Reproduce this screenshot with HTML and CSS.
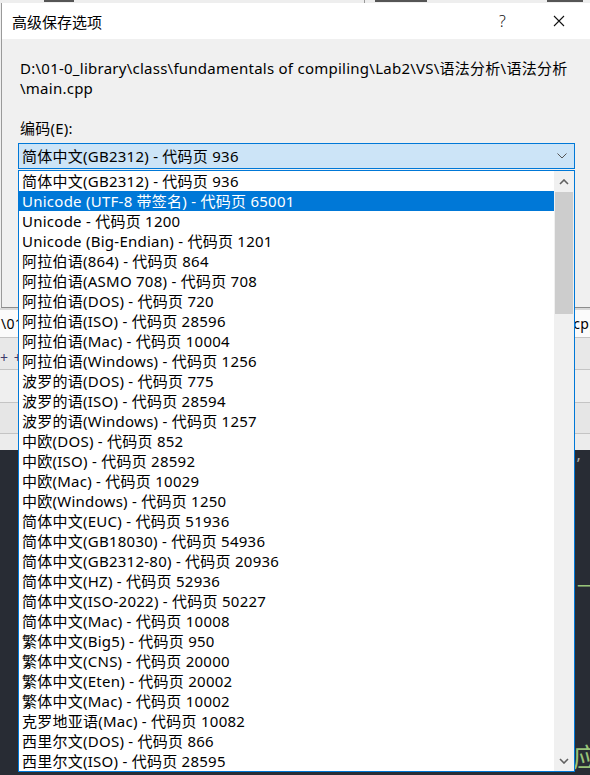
FILE: index.html
```html
<!DOCTYPE html>
<html>
<head>
<meta charset="utf-8">
<link rel="stylesheet" href="styles.css">
</head>
<body>
<div class="screen">
  <div class="topstrip"><i class="frag f1"></i><i class="frag f2"></i><i class="frag f3"></i><i class="frag f4"></i></div>
  <div class="dialog">
    <div class="titlebar">
      <span class="title">高级保存选项</span>
      <span class="help">?</span>
      <span class="close"><svg width="12" height="12" viewBox="0 0 12 12"><path d="M1 1L11 11M11 1L1 11" stroke="#111" stroke-width="1.1" fill="none"/></svg></span>
    </div>
    <div class="body">
      <div class="path">D:\01-0_library\class\fundamentals of compiling\Lab2\VS\语法分析\语法分析<br>\main.cpp</div>
      <div class="label">编码(E):</div>
      <div class="combo">
        <span class="combo-text">简体中文(GB2312) - 代码页 936</span>
        <svg class="chev" width="10" height="6" viewBox="0 0 10 6"><path d="M0.5 0.5L5 5L9.5 0.5" stroke="#555" stroke-width="1" fill="none"/></svg>
      </div>
    </div>
  </div>
  <div class="backdrop">
    <div class="brow b1"><span>\01</span><span class="right">cpp</span></div>
    <div class="brow b2"><span class="plus">+ +</span></div>
    <div class="brow b3"></div>
    <div class="brow b4"><span></span><span class="right">)</span></div>
    <div class="brow b5"></div>
    <div class="editor">
      <div class="eline e1">’</div>
      <div class="eline e2">一</div>
      <div class="eline e3">应</div>
    </div>
  </div>
  <div class="dropdown">
    <ul class="list">
      <li>简体中文(GB2312) - 代码页 936</li>
      <li class="sel">Unicode (UTF-8 带签名) - 代码页 65001</li>
      <li>Unicode - 代码页 1200</li>
      <li>Unicode (Big-Endian) - 代码页 1201</li>
      <li>阿拉伯语(864) - 代码页 864</li>
      <li>阿拉伯语(ASMO 708) - 代码页 708</li>
      <li>阿拉伯语(DOS) - 代码页 720</li>
      <li>阿拉伯语(ISO) - 代码页 28596</li>
      <li>阿拉伯语(Mac) - 代码页 10004</li>
      <li>阿拉伯语(Windows) - 代码页 1256</li>
      <li>波罗的语(DOS) - 代码页 775</li>
      <li>波罗的语(ISO) - 代码页 28594</li>
      <li>波罗的语(Windows) - 代码页 1257</li>
      <li>中欧(DOS) - 代码页 852</li>
      <li>中欧(ISO) - 代码页 28592</li>
      <li>中欧(Mac) - 代码页 10029</li>
      <li>中欧(Windows) - 代码页 1250</li>
      <li>简体中文(EUC) - 代码页 51936</li>
      <li>简体中文(GB18030) - 代码页 54936</li>
      <li>简体中文(GB2312-80) - 代码页 20936</li>
      <li>简体中文(HZ) - 代码页 52936</li>
      <li>简体中文(ISO-2022) - 代码页 50227</li>
      <li>简体中文(Mac) - 代码页 10008</li>
      <li>繁体中文(Big5) - 代码页 950</li>
      <li>繁体中文(CNS) - 代码页 20000</li>
      <li>繁体中文(Eten) - 代码页 20002</li>
      <li>繁体中文(Mac) - 代码页 10002</li>
      <li>克罗地亚语(Mac) - 代码页 10082</li>
      <li>西里尔文(DOS) - 代码页 866</li>
      <li>西里尔文(ISO) - 代码页 28595</li>
    </ul>
    <div class="scrollbar">
      <div class="arrow"><svg width="10" height="6" viewBox="0 0 10 6"><path d="M1 5L5 1L9 5" stroke="#606060" stroke-width="1.6" fill="none"/></svg></div>
      <div class="thumb"></div>
      <div class="track"></div>
      <div class="arrow"><svg width="10" height="6" viewBox="0 0 10 6"><path d="M1 1L5 5L9 1" stroke="#606060" stroke-width="1.6" fill="none"/></svg></div>
    </div>
  </div>
</div>
</body>
</html>
```

FILE: styles.css
```css
* { box-sizing: border-box; }
html, body { margin: 0; padding: 0; }
body {
  font-family: "Noto Sans", "Noto Sans CJK SC", sans-serif;
  font-size: 15px;
  letter-spacing: 0.25px;
  color: #000;
  background: #f0f0f0;
}
.screen {
  position: relative;
  width: 590px;
  height: 775px;
  overflow: hidden;
  background: #f0f0f0;
}
.topstrip {
  height: 3px;
  overflow: hidden;
  background: #eeeeee;
  display: flex;
  align-items: flex-start;
}
.frag { display: block; height: 2px; background: #555; }
.f1 { width: 30px; margin-left: 44px; }
.f2 { width: 1px; height: 3px; margin-left: 290px; background: #999; }
.f3 { width: 52px; margin-left: 10px; }
.f4 { width: 36px; margin-left: 120px; }

.dialog {
  height: 305px;
  margin-left: 1px;
  border-left: 1px solid #9a9a9a;
  border-bottom: 1px solid #8c8c8c;
  background: #f0f0f0;
  display: flex;
  flex-direction: column;
}
.titlebar {
  height: 36px;
  background: #ffffff;
  display: flex;
  align-items: center;
  padding-left: 10px;
}
.title { font-size: 15px; letter-spacing: 0; }
.help {
  margin-left: auto;
  font-size: 16px;
  font-weight: 300;
  color: #111;
  margin-right: 47px;
}
.close { width: 12px; height: 12px; display: flex; margin-right: 25px; }
.body {
  padding: 19px 0 0 18px;
}
.path {
  line-height: 20px;
  white-space: nowrap;
  color: #000;
}
.label {
  margin-top: 20px;
  line-height: 20px;
}
.combo {
  margin-top: 5px;
  height: 26px;
  width: 557px;
  margin-left: -2px;
  border: 1px solid #0078d7;
  background: #cce4f7;
  display: flex;
  align-items: center;
  padding-left: 3px;
}
.combo-text { line-height: 20px; }
.chev { margin-left: auto; margin-right: 7px; }

.backdrop { display: flex; flex-direction: column; }
.brow {
  display: flex;
  align-items: center;
  padding: 0 0 0 1px;
  font-size: 14px;
  border-bottom: 1px solid #c4c4c4;
}
.brow .right { margin-left: auto; margin-right: -8px; }
.b1 { height: 30px; background: #fbfbfb; border-top: 2px solid #d9d9d9; }
.b2 { height: 32px; background: #e8e8e8; padding-top: 8px; }
.plus { color: #3b3b6b; letter-spacing: 1px; margin-left: -1px; }
.b3 { height: 33px; background: #efefef; }
.b4 { height: 31px; background: #e6e6e6; }
.b5 { height: 16px; background: #ececec; border-bottom: none; }
.editor {
  height: 330px;
  background: #282c34;
  padding-left: 577px;
  display: flex;
  flex-direction: column;
}
.eline { line-height: 20px; white-space: nowrap; }
.e1 { color: #b0b0b0; margin-top: 4px; font-size: 16px; }
.e2 { color: #98c379; margin-top: 102px; font-size: 18px; }
.e3 { color: #98c379; margin-top: 146px; font-size: 26px; line-height: 30px; margin-left: -4px; }

.dropdown {
  position: absolute;
  left: 18px;
  top: 170px;
  width: 557px;
  height: 602px;
  border: 1px solid #0078d7;
  background: #fff;
  display: flex;
}
.list {
  list-style: none;
  margin: 0;
  padding: 0;
  flex: 1;
}
.list li {
  height: 20px;
  line-height: 20px;
  padding-left: 3px;
  white-space: nowrap;
}
.list li.sel { background: #0078d7; color: #fff; }
.scrollbar {
  width: 20px;
  background: #f0f0f0;
  display: flex;
  flex-direction: column;
}
.arrow {
  height: 21px;
  display: flex;
  align-items: center;
  justify-content: center;
}
.thumb {
  height: 122px;
  background: #cdcdcd;
  margin: 0 1px;
}
.track { flex: 1; }
```
